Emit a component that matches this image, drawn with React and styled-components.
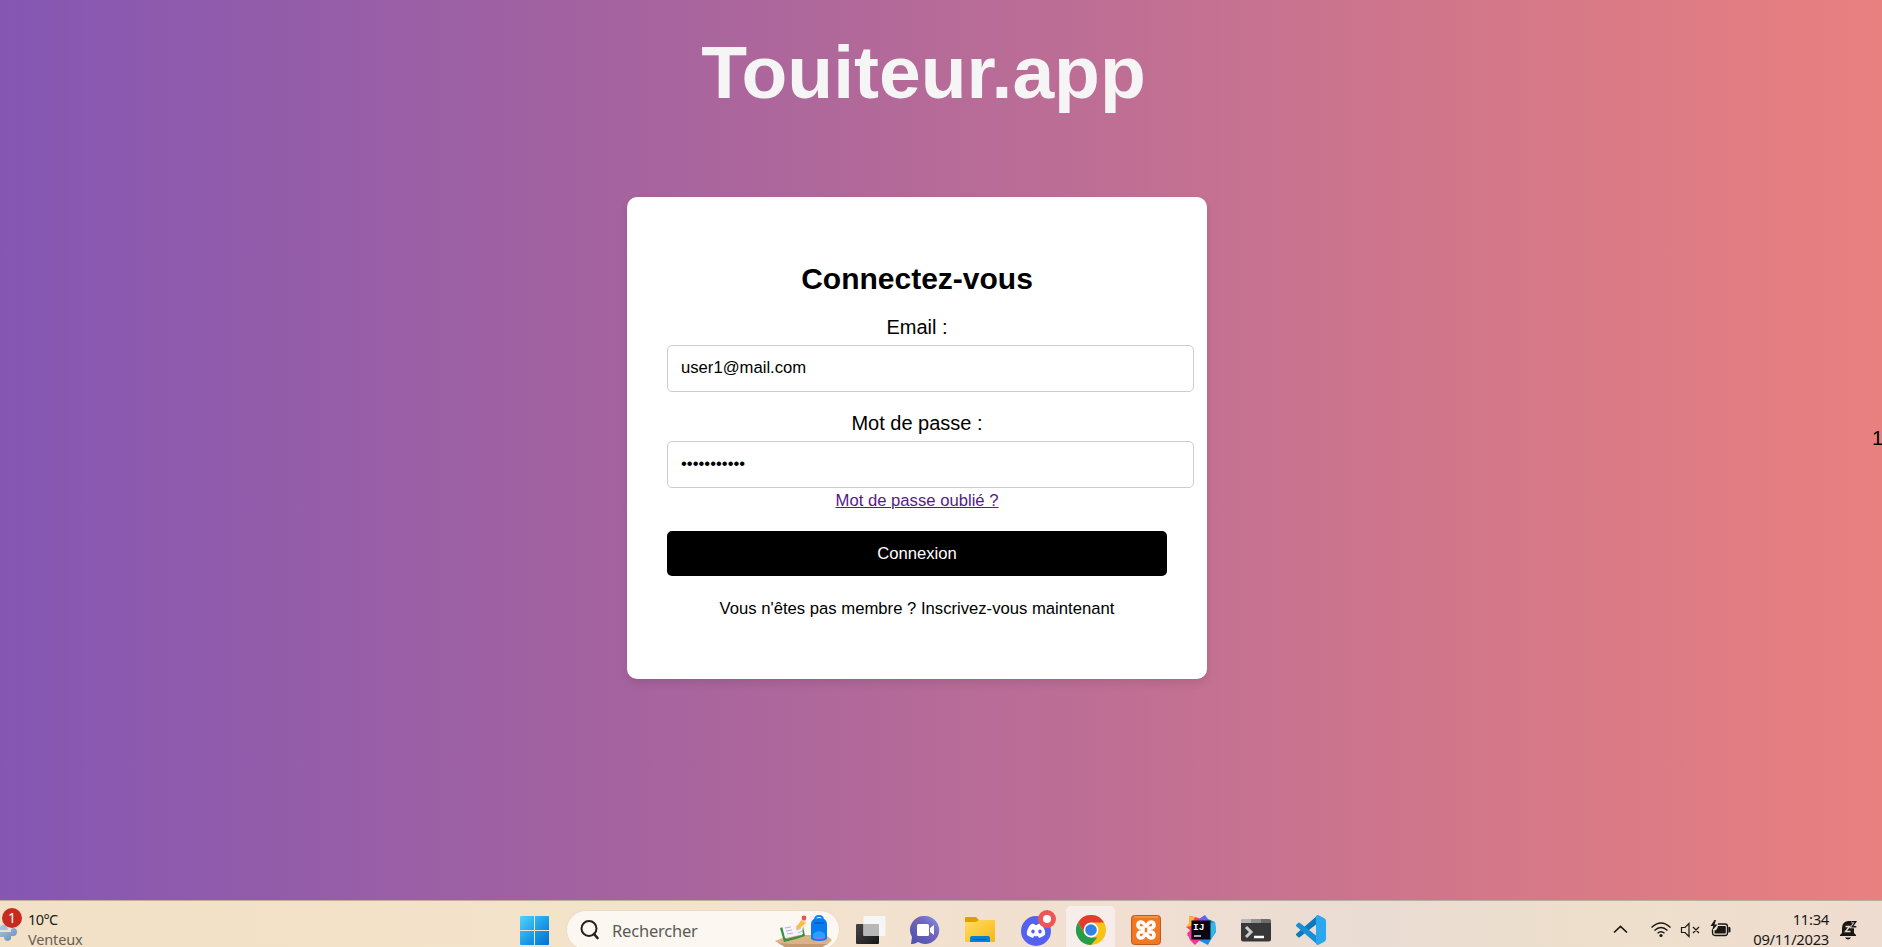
import React from "react";
import styled, { createGlobalStyle } from "styled-components";

const GlobalStyle = createGlobalStyle`
  body {
    margin: 0;
    overflow: hidden;
    font-family: "Liberation Sans", Arial, sans-serif;
    color: #000;
  }
`;

const Screen = styled.div`
  display: flex;
  flex-direction: column;
  width: 1882px;
  height: 947px;
  overflow: hidden;
  position: relative;
`;

const Page = styled.main`
  display: flex;
  flex-direction: column;
  align-items: center;
  height: 900px;
  flex: none;
  padding-right: 48px;
  box-sizing: border-box;
  background: linear-gradient(to right, #8557b3 0%, #a5639f 33%, #c27093 62%, #d77987 83%, #e98080 100%);
`;

const SiteTitle = styled.h1`
  margin: 28px 0 0 13px;
  height: 169px;
  font-size: 75px;
  line-height: 88px;
  color: #f5f5f5;
`;

const Card = styled.form`
  display: flex;
  flex-direction: column;
  align-items: center;
  box-sizing: border-box;
  width: 580px;
  height: 482px;
  padding: 65px 40px 0;
  background: #fff;
  border-radius: 10px;
  box-shadow: 0 4px 8px rgba(0, 0, 0, 0.1);
`;

const CardTitle = styled.h2`
  margin: 0 0 17px;
  font-size: 30px;
  line-height: 34px;
`;

const Label = styled.label`
  font-size: 20px;
  line-height: 28px;
  margin: ${(p) => p.$top || 0}px 0 4px;
`;

const Field = styled.input`
  align-self: flex-start;
  flex: none;
  box-sizing: border-box;
  width: 527px;
  height: 47px;
  padding: 0 13px 2px;
  border: 1px solid #ccc;
  border-radius: 5px;
  font: 16.67px "Liberation Sans", Arial, sans-serif;
  color: #000;
  outline: none;
`;

const ForgotLink = styled.a`
  margin-top: 3px;
  font-size: 16.67px;
  line-height: 19px;
  color: #551a8b;
  text-decoration: underline;
`;

const SubmitButton = styled.button`
  width: 500px;
  height: 45px;
  margin: 21px 0 23px;
  border: 0;
  border-radius: 5px;
  background: #000;
  color: #fff;
  font: 16.67px "Liberation Sans", Arial, sans-serif;
`;

const SignupText = styled.p`
  margin: 0;
  font-size: 16.67px;
  line-height: 19px;
`;

const EdgeCount = styled.span`
  position: absolute;
  right: -1px;
  top: 427px;
  font-size: 20px;
  line-height: 23px;
`;

const Taskbar = styled.footer`
  display: grid;
  grid-template-columns: 519px 1fr 290px;
  height: 47px;
  flex: none;
  box-sizing: border-box;
  border-top: 1px solid #bcae9f;
  background: linear-gradient(to right, #f2e1c6, #f3e3cb 38%, #f1dfd2 60%, #e9dcd3 73%, #eedfcb 85%, #efdcd0);
  font-family: "Noto Sans", sans-serif;
`;

const Weather = styled.div`
  display: flex;
  gap: 5px;
  padding-top: 7px;
`;

const WeatherText = styled.div`
  display: flex;
  flex-direction: column;
  padding-top: 1px;
  font-size: 14.5px;
  line-height: 20px;
  letter-spacing: -0.6px;
  color: #201e1a;
`;

const Muted = styled.span`
  color: #666056;
  letter-spacing: -0.15px;
`;

const AppRow = styled.nav`
  display: flex;
  align-items: flex-start;
`;

const AppSlot = styled.div`
  display: flex;
  justify-content: center;
  box-sizing: border-box;
  width: ${(p) => p.$w || 55}px;
  height: 46px;
  flex: none;
  padding-top: ${(p) => p.$top || 14}px;
  padding-left: ${(p) => p.$left || 0}px;
`;

const ActiveSlot = styled.div`
  display: flex;
  justify-content: center;
  box-sizing: border-box;
  width: 49px;
  height: 48px;
  flex: none;
  margin: 5px 3px 0;
  padding-top: 9px;
  border-radius: 5px;
  background: #f7eeeb;
`;

const SearchBox = styled.div`
  display: flex;
  align-items: center;
  box-sizing: border-box;
  width: 274px;
  height: 40px;
  margin: 9px 5px 0 16px;
  padding: 0 6px 0 12px;
  flex: none;
  border: 1px solid #eadcc9;
  border-radius: 20px;
  background: #fcf8f1;
`;

const SearchText = styled.span`
  flex: 1;
  margin-left: 11px;
  padding-top: 1px;
  font-size: 16.5px;
  color: #5c5a56;
  letter-spacing: -0.2px;
`;

const Tray = styled.div`
  display: flex;
  align-items: flex-start;
  color: #191816;
`;

const TrayIcon = styled.svg`
  flex: none;
  margin-left: ${(p) => p.$left || 0}px;
  margin-top: ${(p) => p.$top || 0}px;
`;

const Clock = styled.div`
  width: 88px;
  margin-left: 10px;
  margin-right: -1px;
  padding-top: 8px;
  text-align: right;
  font-size: 14.8px;
  line-height: 20px;
  letter-spacing: -0.3px;
  white-space: nowrap;
`;

function WeatherIcon() {
  return (
    <svg width="23" height="39" viewBox="0 0 23 39">
      <defs>
        <linearGradient id="wind" x1="0" x2="1" y2="1"><stop stopColor="#a8c5df" /><stop offset="1" stopColor="#6288b4" /></linearGradient>
      </defs>
      <path d="M0 19q3-4 7-1l1 4H0z" fill="#a3c0de" />
      <path d="M0 24h11q-1-3 2-4 4 0 4 4t-4 4h-2q1 4-3 5-4 0-4-4H0z" fill="url(#wind)" />
      <path d="M0 23h11" stroke="#e3e2da" strokeWidth="1.5" />
      <circle cx="12" cy="10" r="10" fill="#c72b20" />
      <text x="12" y="15" textAnchor="middle" fontSize="14" fill="#fff">1</text>
    </svg>
  );
}

function WindowsIcon() {
  return (
    <svg width="29" height="29" viewBox="0 0 29 29">
      <defs><linearGradient id="win" x1="0" y1="0" x2="29" y2="29" gradientUnits="userSpaceOnUse"><stop stopColor="#51d3fa" /><stop offset=".55" stopColor="#1b9be8" /><stop offset="1" stopColor="#0070d1" /></linearGradient></defs>
      <path fill="url(#win)" d="M1 0h13v14H0V1q0-1 1-1zm14 0h13q1 0 1 1v13H15zM0 15h14v14H1q-1 0-1-1zm15 0h14v13q0 1-1 1H15z" />
    </svg>
  );
}

function SearchIcon() {
  return (
    <svg width="22" height="22" viewBox="0 0 22 22" fill="none" stroke="#24211e" strokeWidth="2">
      <circle cx="10" cy="9.5" r="7.5" /><path d="m15 15 3.500 4" strokeWidth="2.600" strokeLinecap="round" />
    </svg>
  );
}

function SchoolIcon() {
  return (
    <svg width="58" height="38" viewBox="0 0 58 38">
      <path d="M0 30 15 24h36l6 5-5 5H6z" fill="#dcb389" />
      <path d="m4 32 13 1h35l-6 4H11z" fill="#c69a70" />
      <path d="m5 17 3-1 3 12 16-4 1-9 2 10-9 3-12 3z" fill="#35913e" />
      <path d="m7 15 9-1 4 11-10 2zM17 14l7-3 4 12-8 2z" fill="#f5f2ff" />
      <path d="m10 17 6-1m-5 4 6-1m-5 4 6-1m3-6 4-2m-3 5 4-2m-3 5 4-2" stroke="#aaa5bd" strokeWidth=".8" />
      <path d="m22 15 5-7 4 4-6 5-4 2z" fill="#ffbd3f" /><path d="m26 9 2-3 3 3-1 3z" fill="#ead6c4" /><circle cx="29" cy="7" r="2.4" fill="#e75157" />
      <path d="M40 9q0-4 4-4t4 4" fill="none" stroke="#1785ef" strokeWidth="2" />
      <path d="M36 13q0-6 8-6t8 6v14q0 3-8 3t-8-3z" fill="#087bf0" />
      <path d="M38 23q6-6 12 0v4H38z" fill="#2b9fff" /><path d="M38 26q6 1 12 0v1q-6 3-12 0z" fill="#8a78f0" />
      <path d="M39 12h10" stroke="#045cc3" strokeWidth="1.5" />
    </svg>
  );
}

function TaskViewIcon() {
  return (
    <svg width="30" height="29" viewBox="0 0 30 29">
      <defs><linearGradient id="tv" x2="1" y2="1"><stop stopColor="#454545" /><stop offset="1" stopColor="#171717" /></linearGradient></defs>
      <rect y="8" width="23" height="20" rx="1" fill="url(#tv)" />
      <rect x="7.5" width="22" height="20" rx="1" fill="#f6f6f6" /><path d="M7.5 8H23v12H7.5z" fill="#b7b7b7" />
    </svg>
  );
}

function ChatIcon() {
  return (
    <svg width="30" height="29" viewBox="0 0 30 29">
      <defs><linearGradient id="chat" x1="1" x2="0" y2="1"><stop stopColor="#78a2ed" /><stop offset=".35" stopColor="#7568c0" /><stop offset="1" stopColor="#4950af" /></linearGradient></defs>
      <path d="M15 0a14 14 0 1 1-7 26q-3 2-6 2H1l1-7A14 14 0 0 1 15 0z" fill="url(#chat)" />
      <rect x="7" y="8" width="12" height="12" rx="1.5" fill="#fff" /><path d="m20 12 4-3v10l-4-3z" fill="#fff" />
    </svg>
  );
}

function FolderIcon() {
  return (
    <svg width="30" height="28" viewBox="0 0 30 28">
      <defs><linearGradient id="folder" x2="1" y2="1"><stop stopColor="#ffdd62" /><stop offset="1" stopColor="#f7b817" /></linearGradient></defs>
      <path d="M0 2q0-1 1-1h10l3 3h15q1 0 1 1v6H0z" fill="#dda000" />
      <path d="M0 6h11l3-2h16v22H0z" fill="url(#folder)" />
      <path d="M5 26v-4q0-2 2-2h16q2 0 2 2v4z" fill="#087fd1" /><path d="M8 23.500h14" stroke="#075b9c" />
    </svg>
  );
}

function DiscordIcon() {
  return (
    <svg width="38" height="38" viewBox="0 0 38 38">
      <circle cx="16" cy="22" r="15" fill="#5662ef" />
      <path d="M10 16q3-2 4-1l1 1h2l1-1q2-1 4 1 4 6 3 10-3 2-6 3l-1-2q-2 .6-4 0l-1 2q-3-1-6-3-1-4 3-10z" fill="#fff" />
      <ellipse cx="13" cy="22.500" rx="1.700" ry="2" fill="#5662ef" /><ellipse cx="20" cy="22.500" rx="1.700" ry="2" fill="#5662ef" />
      <circle cx="27" cy="10" r="9" fill="#ed5657" /><circle cx="27" cy="10" r="4" fill="#fff" />
    </svg>
  );
}

function ChromeIcon() {
  return (
    <svg width="30" height="30" viewBox="0 0 30 30">
      <circle cx="15" cy="15" r="15" fill="#fbc216" />
      <path d="M2 7.500A15 15 0 0 1 28 7.500H15l-6.500 11z" fill="#e43b2f" />
      <path d="M2 7.500 8.500 19 15 22.500h6.300L15 30A15 15 0 0 1 2 7.500z" fill="#259d4c" />
      <circle cx="15" cy="15" r="7.400" fill="#fff" /><circle cx="15" cy="15" r="5.800" fill="#3480e9" />
    </svg>
  );
}

function XamppIcon() {
  return (
    <svg width="30" height="30" viewBox="0 0 30 30">
      <rect x=".5" y=".5" width="29" height="29" rx="3" fill="#f27721" stroke="#bd5c22" />
      <path d="M3 2h24" stroke="#f6ad75" />
      <path d="M7 10q0-3 3-3 2 0 3 2l2 2 2-2q1-2 3-2 3 0 3 3 0 2-2 3h-3v4h3q2 1 2 3 0 3-3 3-2 0-3-2l-2-2-2 2q-1 2-3 2-3 0-3-3 0-2 2-3h3v-4H9q-2-1-2-3z" fill="none" stroke="#fff" strokeWidth="3.600" strokeLinejoin="round" />
    </svg>
  );
}

function IdeaIcon() {
  return (
    <svg width="30" height="30" viewBox="0 0 30 30">
      <path d="m4 1 9 2 4 11L1 21l3-6-4-3 5-2z" fill="#ff3b4f" />
      <path d="m3 1 6 1-4 9-5 1 3-4z" fill="#ffb23b" />
      <path d="m1 18 6-4 14 11-8 1-4 4-5-5z" fill="#f73599" /><path d="m13 4 6-4 3 4 7 3 1 10-6 9-2 4-8-4z" fill="#168ee9" />
      <path d="m18 1 4 4-5 5-4-6z" fill="#8b4ef3" /><path d="m22 9 7-2 1 9-6 10z" fill="#31b8e8" />
      <rect x="5.500" y="5.500" width="19" height="19" fill="#080510" />
      <text x="7" y="15" fontFamily="Liberation Mono" fontWeight="700" fontSize="9.500" fill="#fff">IJ</text><path d="M8 21h7" stroke="#fff" strokeWidth="1.300" />
    </svg>
  );
}

function TerminalIcon() {
  return (
    <svg width="30" height="24" viewBox="0 0 30 24">
      <rect y=".5" width="30" height="22" rx="2" fill="#383838" /><path d="M0 4V2q0-2 2-2h8v4z" fill="#b8b8b8" /><path d="M10 0h10v4H10z" fill="#929292" /><path d="M20 0h8q2 0 2 2v2H20z" fill="#6b6b6b" />
      <path d="m5 8 5 5-5 5" fill="none" stroke="#ccc" strokeWidth="3" /><path d="M13 18h10" stroke="#fff" strokeWidth="2.500" />
    </svg>
  );
}

function CodeIcon() {
  return (
    <svg width="30" height="30" viewBox="0 0 30 30">
      <path d="M22 0v8L4 22q-1 1-2 0l-2-2v-1z" fill="#087bbf" /><path d="M0 11v-1l2-2q1-1 2 0l18 14v8z" fill="#168fd5" />
      <path d="m22 0 6 3q2 1 2 3v18q0 2-2 3l-6 3q-2 0-2-2V2q0-2 2-2z" fill="#2aa7ef" />
    </svg>
  );
}

function SystemTray() {
  return (
    <Tray>
      <TrayIcon $left={21} $top={24} width="15" height="9" viewBox="0 0 15 9" fill="none" stroke="currentColor" strokeWidth="1.700"><path d="m1 7.500 6.500-6 6.500 6" /></TrayIcon>
      <TrayIcon $left={22} $top={20} width="22" height="17" viewBox="0 0 22 17" fill="none" stroke="currentColor" strokeWidth="1.400">
        <path d="M1.500 6.500q9.500-9 19 0M4.500 9.500q6.500-6 13 0M7.500 12.300q3.500-3 7 0" /><circle cx="11" cy="14.500" r="1.600" fill="currentColor" stroke="none" />
      </TrayIcon>
      <TrayIcon $left={8} $top={21} width="21" height="17" viewBox="0 0 21 17" fill="none" stroke="currentColor" strokeWidth="1.200">
        <path d="M1.500 5.500h3.500l4-4v13l-4-4H1.500zM13 5l6 6M19 5l-6 6" />
      </TrayIcon>
      <TrayIcon $left={9} $top={19} width="21" height="18" viewBox="0 0 21 18">
        <path d="M8 4h7q2.500 0 2.500 2.500v6.500q0 2.500-2.500 2.500H5q-2.500 0-2.500-2.500v-3" fill="none" stroke="currentColor" strokeWidth="1.300" />
        <path d="M8 6h7q.800 0 .800.800v6q0 .800-.800.800H4.500v-3q2.500 0 3.500-4.600z" fill="currentColor" />
        <path d="M4.500 0 .5 6h2.800l-1.500 5 5.700-6.500H4.500L6 0zM18.300 7H19q1.500 0 1.500 1v3.500q0 1-1.500 1h-.700z" fill="currentColor" />
      </TrayIcon>
      <Clock><div>11:34</div><div>09/11/2023</div></Clock>
      <TrayIcon $left={12} $top={19} width="18" height="20" viewBox="0 0 18 20">
        <path d="M8 1Q2 2 2 8v5l-2 2v1h16v-1l-2-2V5l-3-4z" fill="currentColor" /><path d="M5 17.500h6q-1 2-3 2t-3-2z" fill="currentColor" />
        <path d="M5.500 6.500h4l-4 5h5" fill="none" stroke="#efdcd0" strokeWidth="1.400" />
        <path d="M11.500 1.800h4.200l-3.500 5h4.100" fill="none" stroke="#efdcd0" strokeWidth="3" /><path d="M11.500 1.800h4.200l-3.500 5h4.100" fill="none" stroke="currentColor" strokeWidth="1.400" />
      </TrayIcon>
    </Tray>
  );
}

export default function App() {
  return (
    <>
      <GlobalStyle />
      <Screen>
        <Page>
          <SiteTitle>Touiteur.app</SiteTitle>
          <Card onSubmit={(e) => e.preventDefault()}>
            <CardTitle>Connectez-vous</CardTitle>
            <Label htmlFor="email">Email :</Label>
            <Field id="email" type="email" defaultValue="user1@mail.com" />
            <Label htmlFor="password" $top={17}>Mot de passe :</Label>
            <Field id="password" type="password" defaultValue="motdepasse1" />
            <ForgotLink href="#">Mot de passe oublié ?</ForgotLink>
            <SubmitButton type="submit">Connexion</SubmitButton>
            <SignupText>Vous n'êtes pas membre ? Inscrivez-vous maintenant</SignupText>
          </Card>
        </Page>
        <EdgeCount>1</EdgeCount>
        <Taskbar>
          <Weather>
            <WeatherIcon />
            <WeatherText><span>10°C</span><Muted>Venteux</Muted></WeatherText>
          </Weather>
          <AppRow>
            <AppSlot $w={31} $top={15}><WindowsIcon /></AppSlot>
            <SearchBox><SearchIcon /><SearchText>Rechercher</SearchText><SchoolIcon /></SearchBox>
            <AppSlot $w={51} $top={15}><TaskViewIcon /></AppSlot>
            <AppSlot $w={57} $top={15}><ChatIcon /></AppSlot>
            <AppSlot $w={54} $top={15}><FolderIcon /></AppSlot>
            <AppSlot $w={56} $top={8} $left={8}><DiscordIcon /></AppSlot>
            <ActiveSlot><ChromeIcon /></ActiveSlot>
            <AppSlot><XamppIcon /></AppSlot>
            <AppSlot><IdeaIcon /></AppSlot>
            <AppSlot $top={18}><TerminalIcon /></AppSlot>
            <AppSlot><CodeIcon /></AppSlot>
          </AppRow>
          <SystemTray />
        </Taskbar>
      </Screen>
    </>
  );
}
